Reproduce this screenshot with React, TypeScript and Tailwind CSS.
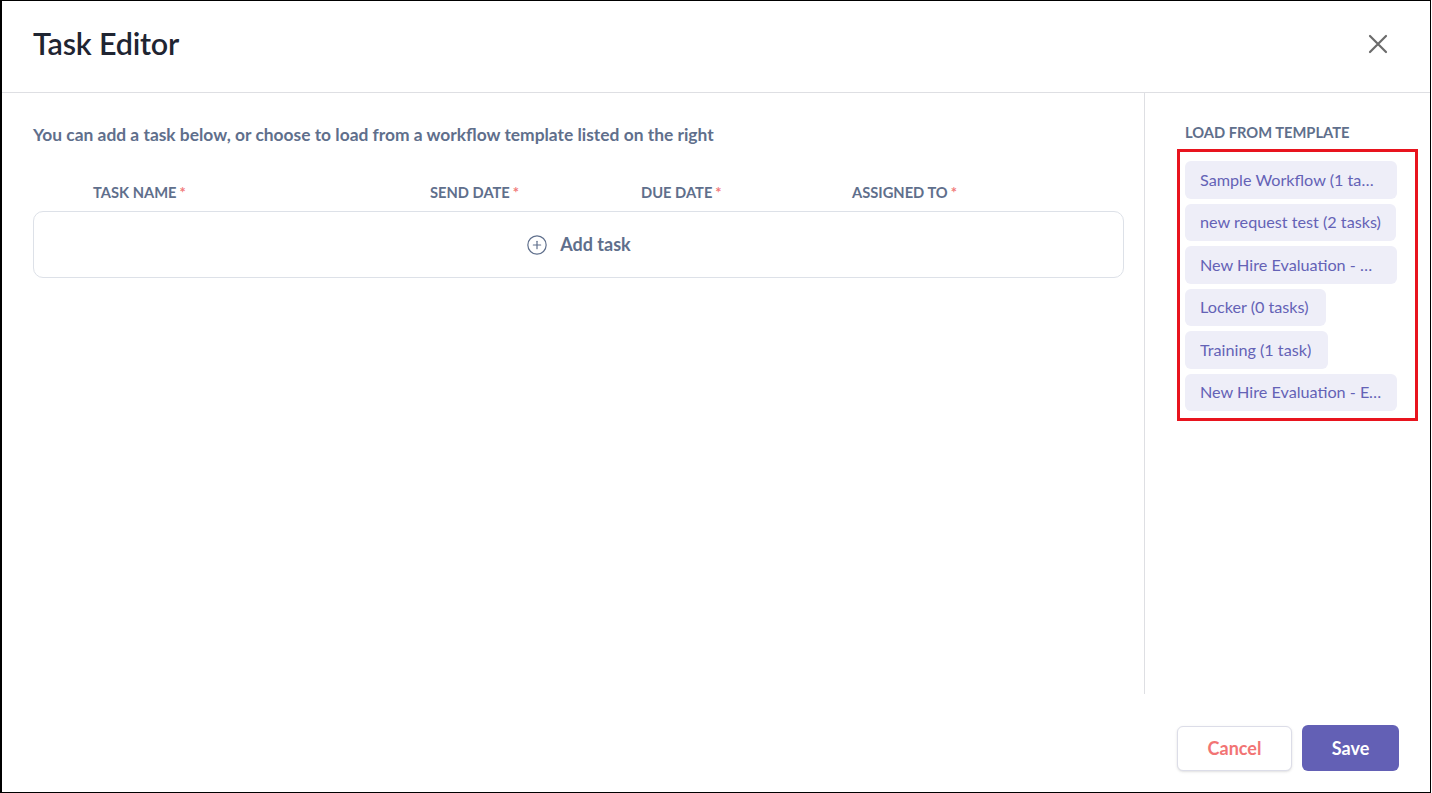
import { CirclePlus } from 'lucide-react'

const templates = [
  { name: 'Sample Workflow (1 task)', cls: 'w-[212px] pr-[17px]' },
  { name: 'new request test (2 tasks)', cls: 'max-w-[212px] pr-[15px]' },
  { name: 'New Hire Evaluation - 30 Days (3 tasks)', cls: 'w-[212px] pr-[18px]' },
  { name: 'Locker (0 tasks)', cls: 'pr-[17px]' },
  { name: 'Training (1 task)', cls: 'pr-[17px]' },
  { name: 'New Hire Evaluation - End of Probation (2 tasks)', cls: 'w-[212px] pr-[15px]' },
]

const columns = [
  { label: 'Task Name', cls: 'w-[397px] pl-[60px]' },
  { label: 'Send Date', cls: 'w-[211px]' },
  { label: 'Due Date', cls: 'w-[211px]' },
  { label: 'Assigned To', cls: 'flex-1' },
]

export default function App() {
  return (
    <div className="w-[1432px] h-[793px] bg-white font-['Lato',sans-serif]">
      <div className="w-[1431px] h-[793px] border border-l-2 border-black flex flex-col">
        {/* Header */}
        <div className="h-[92px] shrink-0 flex items-center justify-between pl-[31px] pr-[42px] pb-[6px] border-b border-[#dedfe3]">
          <h1 className="text-[30.5px] font-semibold text-[#1f2532] tracking-[-0.2px]">Task Editor</h1>
          <button className="text-[#6b6b6b]">
            <svg width="20" height="20" viewBox="0 0 20 20" fill="none" stroke="currentColor" strokeWidth="2.2" strokeLinecap="round">
              <path d="M2 2 L18 18 M18 2 L2 18" />
            </svg>
          </button>
        </div>

        {/* Body */}
        <div className="h-[601px] shrink-0 flex">
          <div className="w-[1143px] pl-[31px] pr-[20px] pt-[31px] border-r border-[#dedfe3]">
            <p className="text-[17.4px] font-bold text-[#5f6f8c] leading-[22px]">
              You can add a task below, or choose to load from a workflow template listed on the right
            </p>
            <div className="flex mt-[37px] mb-[10px] text-[14.7px] font-bold uppercase text-[#5f6f8c] leading-[18px]">
              {columns.map((c) => (
                <div key={c.label} className={c.cls}>
                  {c.label}
                  <span className="text-[#f17a7a] ml-[3px]">*</span>
                </div>
              ))}
            </div>
            <button className="w-full h-[67px] rounded-[10px] border border-[#dde1e8] flex items-center justify-center gap-[12px] text-[#5f6f8c]">
              <CirclePlus className="w-[22px] h-[22px]" strokeWidth={1.3} />
              <span className="text-[18px] font-bold">Add task</span>
            </button>
          </div>

          <div className="flex-1 pl-[40px] pt-[30px]">
            <h2 className="text-[14.7px] font-bold uppercase text-[#5f6f8c] leading-[18px]">Load from template</h2>
            <div className="mt-[8px] -ml-[8px] w-[241px] border-[3px] border-[#e8141e] pl-[5px] pt-[9px] pb-[7px] flex flex-col items-start gap-[5px]">
              {templates.map((t) => (
                <div
                  key={t.name}
                  className={`h-[37.5px] rounded-[6px] bg-[#eeeef8] pl-[15px] flex items-center text-[16.2px] text-[#6462b6] ${t.cls}`}
                >
                  <span className="truncate">{t.name}</span>
                </div>
              ))}
            </div>
          </div>
        </div>

        {/* Footer */}
        <div className="flex-1 flex items-start justify-end gap-[10px] pt-[32px] pr-[31px]">
          <button className="w-[115px] h-[45px] rounded-[6px] border border-[#dcdde8] bg-white shadow-sm text-[18px] font-bold text-[#f27474]">
            Cancel
          </button>
          <button className="w-[97px] h-[46px] -mt-[1px] rounded-[6px] bg-[#6360b5] text-[18px] font-bold text-white">
            Save
          </button>
        </div>
      </div>
    </div>
  )
}
